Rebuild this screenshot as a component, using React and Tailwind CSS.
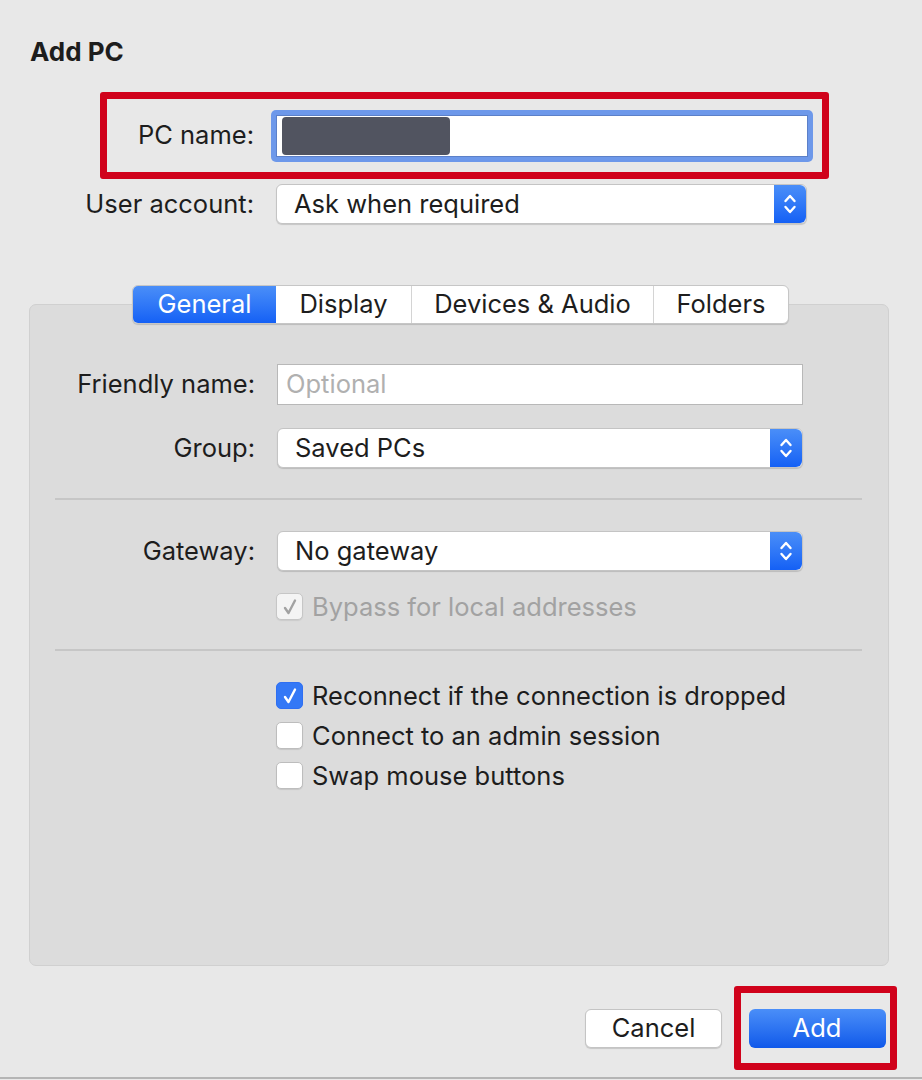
import React from 'react';

const font = { fontFamily: 'Inter, "Liberation Sans", sans-serif' };

function Stepper() {
  return (
    <div className="flex h-full w-[32px] items-center justify-center rounded-r-[6px] bg-gradient-to-b from-[#4a8ef8] to-[#1460f5]">
      <svg width="14" height="24" viewBox="0 0 14 24" fill="none" stroke="white" strokeWidth="2.4" strokeLinecap="round" strokeLinejoin="round">
        <path d="M2.5 9 L7 4 L11.5 9" />
        <path d="M2.5 15 L7 20 L11.5 15" />
      </svg>
    </div>
  );
}

function Select({ value, width = 'w-[526px]' }) {
  return (
    <div className={`flex h-[40px] ${width} items-center rounded-[6px] border border-[#c4c4c4] bg-white shadow-[0_1px_1px_rgba(0,0,0,0.15)]`}>
      <span className="flex-1 pl-[17px] text-[25.5px] text-[#1d1d1d]">{value}</span>
      <Stepper />
    </div>
  );
}

function Row({ label, children, className = '' }) {
  return (
    <div className={`flex items-center ${className}`}>
      <div className="w-[254px] text-right text-[25.5px] text-[#1d1d1d]">{label}</div>
      <div className="ml-[22px]">{children}</div>
    </div>
  );
}

function Check({ label, checked, disabled }) {
  return (
    <div className="flex h-[27px] items-center">
      <div
        className={`flex h-[27px] w-[27px] items-center justify-center rounded-[5px] border ${
          checked && !disabled
            ? 'border-[#2f6ff2] bg-[#3478f6]'
            : 'border-[#bdbdbd] bg-white shadow-[0_1px_1px_rgba(0,0,0,0.1)]'
        } ${disabled ? 'bg-[#ececec] opacity-70' : ''}`}
      >
        {checked && (
          <svg width="16" height="18" viewBox="0 0 16 18" fill="none" stroke={disabled ? '#8a8a8a' : 'white'} strokeWidth="2.4" strokeLinecap="round" strokeLinejoin="round">
            <path d="M3 10 L6.5 15 L13 2.5" />
          </svg>
        )}
      </div>
      <span className={`ml-[9px] text-[25.5px] leading-[27px] ${disabled ? 'text-[#a2a2a2]' : 'text-[#1d1d1d]'}`}>{label}</span>
    </div>
  );
}

export default function App() {
  const tabs = ['General', 'Display', 'Devices & Audio', 'Folders'];
  const tabW = ['w-[143px]', 'w-[135px]', 'w-[242px]', 'w-[135px]'];
  return (
    <div className="relative h-[1080px] w-[922px] overflow-hidden bg-[#e8e8e8]" style={font}>
      <div className="pl-[30px] pt-[36px] text-[26px] font-bold leading-[32px] text-[#1d1d1d]">Add PC</div>

      {/* PC name */}
      <div className="ml-[100px] mt-[24px] flex h-[87px] w-[729px] items-center rounded-[3px] border-[7px] border-[#d0021b]">
        <div className="w-[147px] text-right text-[25.5px] text-[#1d1d1d]">PC name:</div>
        <div className="ml-[17px] flex h-[52px] w-[542px] items-center rounded-[5px] bg-[#6d98ea] p-[5px]">
          <div className="flex h-full w-full items-center border border-[#5c80c8] bg-white pl-[5px]">
            <div className="h-[38px] w-[168px] rounded-[4px] bg-[#515460]" />
          </div>
        </div>
      </div>

      {/* User account */}
      <Row label="User account:" className="mt-[5px]">
        <Select value="Ask when required" width="w-[531px]" />
      </Row>

      {/* Tabs panel */}
      <div className="relative ml-[29px] mr-[33px] mt-[80px] h-[662px] rounded-[7px] border border-[#d0d0d0] bg-[#dcdcdc]">
        <div className="absolute left-[102px] top-[-20px] flex h-[39px] overflow-hidden rounded-[6px] border border-[#c6c6c6] bg-white shadow-[0_1px_1px_rgba(0,0,0,0.15)]">
          {tabs.map((t, i) => (
            <div
              key={t}
              className={`flex items-center justify-center text-[25.5px] ${tabW[i]} ${
                i === 0
                  ? 'bg-gradient-to-b from-[#4a8ef8] to-[#1460f5] text-white'
                  : 'border-l border-[#d4d4d4] text-[#1d1d1d]'
              } ${i === 1 ? 'border-l-0' : ''}`}
            >
              {t}
            </div>
          ))}
        </div>

        <div className="flex flex-col pt-[59px]">
          <div className="-ml-[29px] flex items-center">
            <div className="w-[254px] text-right text-[25.5px] text-[#1d1d1d]">Friendly name:</div>
            <div className="ml-[22px] flex h-[41px] w-[526px] items-center border border-[#b8b8b8] bg-white pl-[8px] text-[25.5px] text-[#b0b0b0]">
              Optional
            </div>
          </div>
          <div className="-ml-[29px] mt-[23px] flex h-[40px] items-center">
            <div className="w-[254px] text-right text-[25.5px] text-[#1d1d1d]">Group:</div>
            <div className="ml-[22px]">
              <Select value="Saved PCs" />
            </div>
          </div>

          <div className="ml-[25px] mr-[26px] mt-[30px] h-[2px] bg-[#c6c6c6]" />

          <div className="-ml-[29px] mt-[31px] flex h-[40px] items-center">
            <div className="w-[254px] text-right text-[25.5px] text-[#1d1d1d]">Gateway:</div>
            <div className="ml-[22px]">
              <Select value="No gateway" />
            </div>
          </div>
          <div className="ml-[246px] mt-[22px]">
            <Check label="Bypass for local addresses" checked disabled />
          </div>

          <div className="ml-[25px] mr-[26px] mt-[29px] h-[2px] bg-[#c6c6c6]" />

          <div className="ml-[246px] mt-[31px] flex flex-col gap-[13px]">
            <Check label="Reconnect if the connection is dropped" checked />
            <Check label="Connect to an admin session" />
            <Check label="Swap mouse buttons" />
          </div>
        </div>
      </div>

      {/* Buttons */}
      <div className="mt-[20px] flex items-center justify-end pr-[25px]">
        <div className="flex h-[39px] w-[137px] items-center justify-center rounded-[6px] border border-[#c4c4c4] bg-white text-[25.5px] text-[#1d1d1d] shadow-[0_1px_1px_rgba(0,0,0,0.15)]">
          Cancel
        </div>
        <div className="ml-[12px] flex h-[84px] w-[163px] items-center justify-center rounded-[3px] border-[7px] border-[#d0021b]">
          <div className="ml-[3px] flex h-[39px] w-[137px] items-center justify-center rounded-[6px] bg-gradient-to-b from-[#4a8ef8] to-[#0f58ea] text-[25.5px] text-white">
            Add
          </div>
        </div>
      </div>

      <div className="absolute bottom-[1px] left-0 h-[2px] w-full bg-[#b5b5b5]" />
    </div>
  );
}
